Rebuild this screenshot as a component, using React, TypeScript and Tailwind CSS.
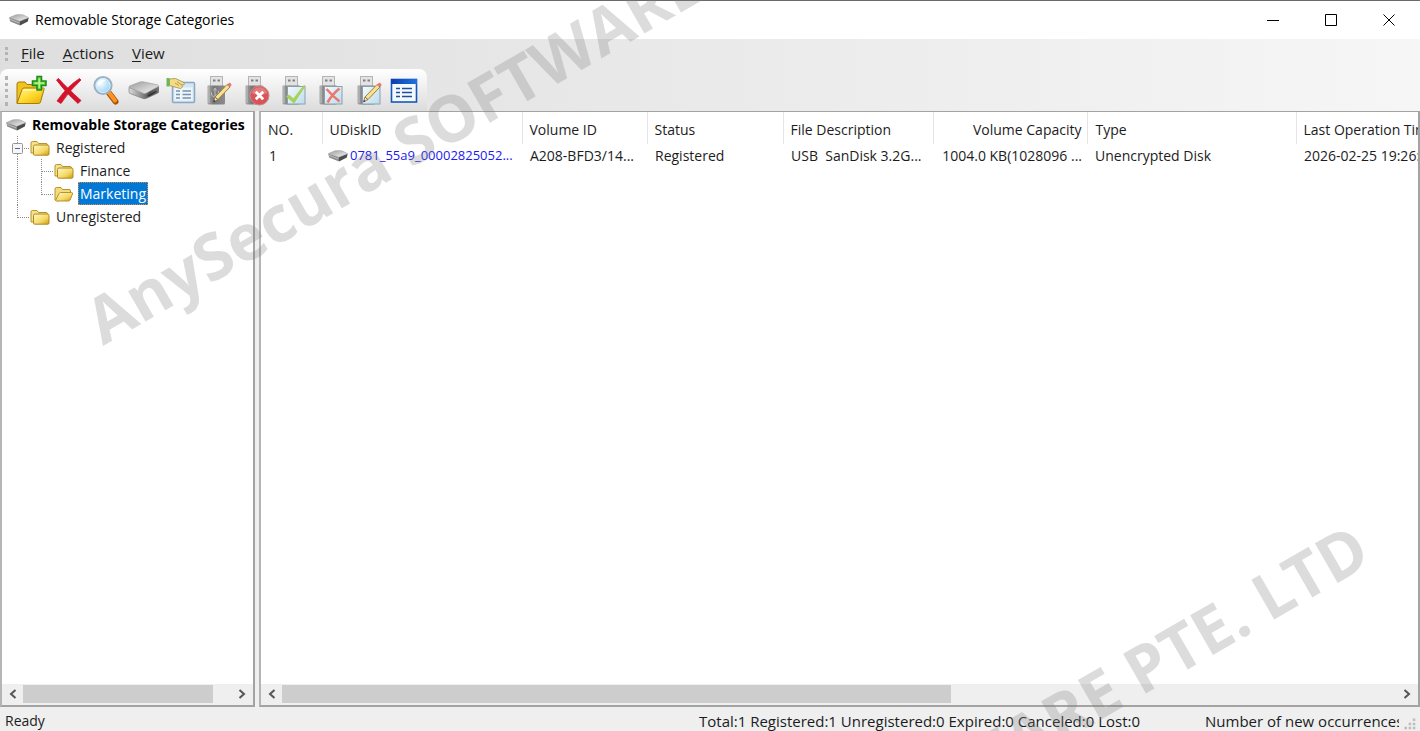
import React from "react";

type Kids = { children: React.ReactNode };

function Defs() {
  return (
    <svg width="0" height="0" className="absolute" aria-hidden="true">
      <defs>
        <linearGradient id="folder" x1="0" y1="0" x2="1" y2="1">
          <stop offset="0" stopColor="#fff3a0" />
          <stop offset="0.5" stopColor="#ffdb2e" />
          <stop offset="1" stopColor="#e6a90a" />
        </linearGradient>
        <linearGradient id="smallFolder" x1="0" y1="0" x2="1" y2="1">
          <stop offset="0" stopColor="#fff8c8" />
          <stop offset="0.6" stopColor="#f5d964" />
          <stop offset="1" stopColor="#c69a1c" />
        </linearGradient>
        <linearGradient id="driveTop" x1="0" y1="0" x2="1" y2="1">
          <stop offset="0" stopColor="#9a9a9a" />
          <stop offset="1" stopColor="#f8f8f8" />
        </linearGradient>
        <linearGradient id="driveSide" x1="0" y1="0" x2="1" y2="0">
          <stop offset="0" stopColor="#dcdcdc" />
          <stop offset="0.5" stopColor="#7c7c7c" />
          <stop offset="0.7" stopColor="#4a4a4a" />
          <stop offset="1" stopColor="#7a7a7a" />
        </linearGradient>
        <linearGradient id="stick" x1="0" y1="0" x2="1" y2="0">
          <stop offset="0" stopColor="#a8a8a8" />
          <stop offset="0.35" stopColor="#787878" />
          <stop offset="1" stopColor="#8c8c8c" />
        </linearGradient>
        <linearGradient id="sheet" x1="0" y1="0" x2="1" y2="1">
          <stop offset="0" stopColor="#f4fafd" />
          <stop offset="1" stopColor="#bcdcee" />
        </linearGradient>
        <radialGradient id="lens" cx="0.35" cy="0.35" r="0.7">
          <stop offset="0" stopColor="#ffffff" />
          <stop offset="1" stopColor="#8fd0f5" />
        </radialGradient>
        <linearGradient id="win" x1="0" y1="0" x2="1" y2="0">
          <stop offset="0" stopColor="#0a3fae" />
          <stop offset="1" stopColor="#1f72e0" />
        </linearGradient>
      </defs>
    </svg>
  );
}

function Icon({ children }: Kids) {
  return (
    <svg viewBox="0 0 32 32" className="size-8" aria-hidden="true">
      {children}
    </svg>
  );
}

function FolderAddIcon() {
  return (
    <Icon>
      <path d="M2 28V9q0-2 2-2h6l2 2.500h10v5H8z" fill="#f2c21d" stroke="#a87a08" />
      <path d="M2 28.500L7 14.500q.4-1.500 2-1.500h19.500q1 0 .6 1.200L25.500 27q-.5 1.500-2 1.500z" fill="url(#folder)" stroke="#a87a08" />
      <path d="M8.500 15h18" stroke="#fff8bd" strokeWidth="1.200" />
      <path d="M22 1.500h4.500v4.500H31v4.500h-4.500V15H22v-4.500h-4.500V6H22z" fill="#6fd43a" stroke="#188a1e" strokeWidth="1.500" />
      <path d="M24.200 3.500v9.500M19.500 8.200H29" stroke="#c7f5a0" strokeWidth="1.200" />
    </Icon>
  );
}

function DeleteIcon() {
  return (
    <Icon>
      <g fill="#d3132b" stroke="#d3132b" strokeWidth=".8" strokeLinejoin="round">
        <path d="M6.500 3.500Q15 13 29 25.500l-3 3Q13 17 4.500 5z" />
        <path d="M27.500 3.500l1.500 1.500Q17 16 9 28.500L5 26Q14.500 12 27.500 3.500z" />
      </g>
    </Icon>
  );
}

function SearchIcon() {
  return (
    <Icon>
      <path d="M19 18l6.500 8.500" stroke="#a8510a" strokeWidth="6" strokeLinecap="round" />
      <path d="M19 17.500l6 8" stroke="#ff9322" strokeWidth="4" strokeLinecap="round" />
      <circle cx="13" cy="10.500" r="8.500" fill="url(#lens)" stroke="#9db2c6" strokeWidth="2.200" />
      <circle cx="13" cy="10.500" r="7" fill="none" stroke="#d9effb" />
      <path d="M8.500 9.500q1.500-4 5.500-4" fill="none" stroke="#fff" strokeWidth="2" strokeLinecap="round" />
    </Icon>
  );
}

function DriveIcon() {
  return (
    <Icon>
      <path d="M2 12.500v4.500q0 1 1 1.500l13 5q2 .6 3.500-.2L31 18q1-.6 1-1.800V11.500L19 18z" fill="url(#driveSide)" stroke="#6e6e6e" strokeWidth=".6" />
      <path d="M2.200 12.500q-.6-1 .8-1.700L13 7q1.500-.5 3-.2l14.500 3q1.800.7.500 1.700L19 18.200q-1.200.6-2.700.1z" fill="url(#driveTop)" stroke="#a2a2a2" strokeWidth=".7" />
      <path d="M21 20.800l8.500-4.300" stroke="#2f2f2f" strokeWidth="1.400" />
    </Icon>
  );
}

function SmallDrive() {
  return (
    <svg viewBox="0 0 20 12" className="h-3 w-5 shrink-0" aria-hidden="true">
      <path d="M.3 3.800L1.200 7.500l9.800 4V6.500z" fill="#8b8b8b" />
      <path d="M11 6.500v5l7.800-4 .9-3.700z" fill="#4d4d4d" />
      <path d="M.3 3.600L7 .8q3-.6 7 0l5.700 2.800L11.500 7q-.7.300-1.500 0z" fill="url(#driveTop)" stroke="#a0a0a0" strokeWidth=".5" />
      <path d="M.8 5.300l9.200 3.500" stroke="#c9c9c9" strokeWidth=".8" />
    </svg>
  );
}

function CardIcon() {
  return (
    <Icon>
      <rect x="8.500" y="7.500" width="22" height="20" rx="1" fill="#d5e6f3" stroke="#88a9c4" strokeWidth="1.500" />
      <rect x="10.500" y="12.500" width="18" height="13" fill="#eef6fb" />
      <path d="M12 16h4M12 19.500h4M12 23h4M18.500 16H27M18.500 19.500H27M18.500 23H27" stroke="#7593ae" strokeWidth="1.400" />
      <path d="M2.500 3h3v8.500h-3z" fill="#5fbf57" />
      <path d="M5.500 4l6-.5 8.500 4q1 1.500-.5 2.500l-2-.5 1 2.500-2 1.500-4-1-3.500-1-3.500-1z" fill="#f4dc86" stroke="#a38e4d" strokeWidth=".8" />
      <path d="M11 8l4 2.500M13 6.500l4 3" stroke="#a38e4d" strokeWidth=".8" />
    </Icon>
  );
}

function Stick({ children }: Kids) {
  return (
    <Icon>
      <rect x="9.500" y="1.500" width="12" height="10" fill="#e3e3e3" stroke="#b4b4b4" />
      <path d="M12 4.500h2.500v2H12zM16.500 4.500H19v2h-2.500z" fill="#808080" />
      <path d="M7 10.500h16q1 0 1 1V28q0 1.500-1.500 1.500h-14Q6.500 29.500 6.500 28V11.500q0-1 .5-1z" fill="url(#stick)" />
      <path d="M8 11v17" stroke="#bfbfbf" />
      {children}
    </Icon>
  );
}

function Pencil() {
  return (
    <g>
      <path d="M12.500 27l1.500-5 3 2.500z" fill="#f4dfb8" stroke="#5f5138" strokeWidth=".7" />
      <path d="M14 22L26 9.500l3 2.500L17 24.500z" fill="#f9e08a" stroke="#8f7440" strokeWidth=".9" />
      <path d="M26 9.500l1.500-1.300q1.300-.8 2.300.2 1.200 1.200.5 2.300L29 12z" fill="#e8777a" />
      <path d="M12.500 27l.5-2 1.400 1.200z" fill="#222" />
    </g>
  );
}

function StickEditIcon() {
  return (
    <Stick>
      <path d="M14 26V14M14 23l-3.500-3v-2.500M14 21l3.500-2.500V16M12.500 15.500L14 13l1.500 2.500" fill="none" stroke="#c0c0c0" />
      <Pencil />
    </Stick>
  );
}

function StickStopIcon() {
  return (
    <Stick>
      <circle cx="20.500" cy="20.500" r="9.500" fill="#d8545a" stroke="#c58a8c" />
      <path d="M12.500 18a8.500 8.500 0 0 1 16 0q-8 4-16 0z" fill="#e88a8d" opacity=".7" />
      <path d="M16.800 16.800l7.400 7.400M24.200 16.800l-7.400 7.400" stroke="#fff" strokeWidth="2.800" />
    </Stick>
  );
}

function Sheet() {
  return <rect x="11.500" y="11.500" width="17.500" height="17.500" fill="url(#sheet)" stroke="#8ba0ae" />;
}

function StickApproveIcon() {
  return (
    <Stick>
      <Sheet />
      <path d="M10.500 21.500l2.500-1.500 4.500 4L28 10.500l1 .5L18 28z" fill="#a6d355" stroke="#a6d355" />
    </Stick>
  );
}

function StickRejectIcon() {
  return (
    <Stick>
      <Sheet />
      <path d="M13.500 14q6 7 13 12.500M26.500 13.500q-7 5.500-12 14" stroke="#ea7a70" strokeWidth="2.600" fill="none" />
    </Stick>
  );
}

function StickNoteIcon() {
  return (
    <Stick>
      <Sheet />
      <Pencil />
    </Stick>
  );
}

function ListIcon() {
  return (
    <Icon>
      <rect x="3.500" y="4.500" width="25" height="22.500" fill="#f3f9fe" stroke="#1558bd" strokeWidth="1.600" />
      <rect x="3" y="4" width="26" height="5" fill="url(#win)" />
      <path d="M8 13.500h4M8 17.500h4M8 21.500h4M14 13.500h10M14 17.500h10M14 21.500h10" stroke="#1d4f9f" strokeWidth="1.700" />
    </Icon>
  );
}

function TreeFolder({ open }: { open?: boolean }) {
  return (
    <svg viewBox="0 0 20 16" className="h-4 w-5 shrink-0" aria-hidden="true">
      {open ? (
        <>
          <path d="M1 14V3q0-1.500 1.500-1.500H7L8.500 3.500H15Q16.500 3.500 16.500 5v3L4 15z" fill="#f3dc7d" stroke="#b8922a" />
          <path d="M1.500 14.500L5 7.500q.5-1 1.500-1h11q1.500 0 1 1.500L16 14q-.5 1-1.500 1H2.500z" fill="url(#smallFolder)" stroke="#b8922a" />
        </>
      ) : (
        <>
          <path d="M1 13V3Q1 1.500 2.500 1.500H7L8.500 3.500H16q1.500 0 1.500 1.500v8z" fill="#f6e28a" stroke="#b8922a" />
          <path d="M3.500 6.500Q3.500 5 5 5h12.500Q19 5 19 6.500V14q0 1.200-1.200 1.200H4.700Q3.500 15.200 3.500 14z" fill="url(#smallFolder)" stroke="#b08a20" />
        </>
      )}
    </svg>
  );
}

type Link = "bar" | "tee" | "elbow" | "box";

function Connector({ kind }: { kind: Link }) {
  return (
    <svg viewBox="0 0 24 23" className="h-[23px] w-6 shrink-0" aria-hidden="true">
      <g stroke="#8c8c8c" strokeDasharray="1 1" fill="none">
        <path d={kind === "elbow" ? "M11.500 0V13" : "M11.500 0V23"} />
        {kind !== "bar" && <path d="M12 12.500H24" />}
      </g>
      {kind === "box" && (
        <>
          <rect x="6.500" y="7.500" width="10" height="10" rx="1" fill="#f7f7f7" stroke="#959595" />
          <path d="M9 12.500h5" stroke="#3f63b5" />
        </>
      )}
    </svg>
  );
}

const tree: { label: string; links: Link[]; open?: boolean }[] = [
  { label: "Registered", links: ["box"] },
  { label: "Finance", links: ["bar", "tee"] },
  { label: "Marketing", links: ["bar", "elbow"], open: true },
  { label: "Unregistered", links: ["elbow"] },
];

const tools: { label: string; icon: React.ReactNode }[] = [
  { label: "New category", icon: <FolderAddIcon /> },
  { label: "Delete", icon: <DeleteIcon /> },
  { label: "Find", icon: <SearchIcon /> },
  { label: "Disk", icon: <DriveIcon /> },
  { label: "Register", icon: <CardIcon /> },
  { label: "Edit disk", icon: <StickEditIcon /> },
  { label: "Cancel disk", icon: <StickStopIcon /> },
  { label: "Approve disk", icon: <StickApproveIcon /> },
  { label: "Reject disk", icon: <StickRejectIcon /> },
  { label: "Disk notes", icon: <StickNoteIcon /> },
  { label: "List", icon: <ListIcon /> },
];

function Grip({ className }: { className: string }) {
  return <span className={"w-0 border-l-3 border-dotted border-[#b4b4b4] " + className} />;
}

function ScrollArrow({ dir, label }: { dir: "left" | "right"; label: string }) {
  return (
    <button type="button" aria-label={label} className="flex h-5 w-5 shrink-0 items-center justify-center">
      <svg viewBox="0 0 10 10" className="size-[10px]" aria-hidden="true">
        <path d={dir === "left" ? "M7.500 1L3 5l4.500 4" : "M2.500 1L7 5 2.500 9"} fill="none" stroke="#555" strokeWidth="2" />
      </svg>
    </button>
  );
}

function ScrollBar({ thumb }: { thumb: string }) {
  return (
    <div className="flex h-[21px] shrink-0 items-start bg-[#efefef] px-px">
      <ScrollArrow dir="left" label="Scroll left" />
      <div className="flex min-w-0 flex-1 pt-px">
        <div className={"h-[18px] bg-[#cdcdcd] " + thumb} />
      </div>
      <ScrollArrow dir="right" label="Scroll right" />
    </div>
  );
}

const headers = [
  { text: "NO.", cls: "pl-[7px] text-left" },
  { text: "UDiskID", cls: "pl-[7px] text-left" },
  { text: "Volume ID", cls: "pl-[7px] text-left" },
  { text: "Status", cls: "pl-[7px] text-left" },
  { text: "File Description", cls: "pl-[7px] text-left" },
  { text: "Volume Capacity", cls: "pr-[5px] text-right" },
  { text: "Type", cls: "pl-2 text-left" },
  { text: "Last Operation Time", cls: "pl-[7px] text-left" },
];

const watermark = "AnySecura SOFTWARE PTE. LTD";

export default function App() {
  return (
    <div className="relative flex h-screen flex-col overflow-hidden bg-[#efefef] font-['Open_Sans',sans-serif] text-sm text-[#1c1c1c]">
      <Defs />

      <header className="flex h-[39px] shrink-0 items-center border-t border-[#6b696b] bg-white pr-0.5 pl-[9px]">
        <SmallDrive />
        <h1 className="ml-1.5 flex-1 text-sm text-black">Removable Storage Categories</h1>
        {[
          { label: "Minimize", d: "M0 6.500h12" },
          { label: "Maximize", d: "M.5.5h11v11H.5z" },
          { label: "Close", d: "M.5.5l11 11M11.500.5l-11 11" },
        ].map((b) => (
          <button key={b.label} type="button" aria-label={b.label} className="flex h-full w-[58px] items-center justify-center">
            <svg viewBox="0 0 12 12" className="size-3" aria-hidden="true">
              <path d={b.d} fill="none" stroke="#000" />
            </svg>
          </button>
        ))}
      </header>

      <div className="shrink-0 bg-linear-to-r from-[#dedede] to-[#f6f6f6]">
        <nav className="flex h-[30px] items-center pl-[5px]">
          <Grip className="h-[14px]" />
          <div className="flex gap-[18px] pl-[13px] text-[15px]">
            {["File", "Actions", "View"].map((m) => (
              <button key={m} type="button">
                <span className="underline underline-offset-2">{m[0]}</span>
                {m.slice(1)}
              </button>
            ))}
          </div>
        </nav>
        <div className="flex h-[42px] w-[427px] items-center rounded-tr-lg rounded-l-lg bg-linear-to-b from-white to-[#dcdcdc] pt-0.5 pr-[7px] pl-[5px]">
          <Grip className="h-[30px]" />
          <div className="flex flex-1 justify-between pl-[7px]">
            {tools.map((t) => (
              <button key={t.label} type="button" aria-label={t.label} className="size-8">
                {t.icon}
              </button>
            ))}
          </div>
        </div>
      </div>

      <main className="flex min-h-0 flex-1 gap-1">
        <aside className="flex w-[255px] shrink-0 flex-col border-2 border-t border-[#a3a3a3] border-l-[#b5b5b5] bg-white">
          <div className="flex-1 pt-px pl-1">
            <button type="button" className="flex h-[23px] items-center gap-1.5 font-bold whitespace-nowrap text-black">
              <SmallDrive />
              Removable Storage Categories
            </button>
            <ul>
              {tree.map((n) => (
                <li key={n.label} className="flex h-[23px] items-center">
                  {n.links.map((k, i) => (
                    <Connector key={i} kind={k} />
                  ))}
                  <button type="button" className="flex items-center gap-1">
                    <TreeFolder open={n.open} />
                    <span
                      className={
                        n.open
                          ? "border border-dotted border-[#e08a3a] bg-[#0078d7] px-px leading-[21px] text-white"
                          : "px-0.5 leading-[21px]"
                      }
                    >
                      {n.label}
                    </span>
                  </button>
                </li>
              ))}
            </ul>
          </div>
          <ScrollBar thumb="w-[91%]" />
        </aside>

        <section className="flex min-w-0 flex-1 flex-col border-2 border-t border-[#a3a3a3] border-l-[#b5b5b5] bg-white">
          <div className="min-h-0 flex-1 overflow-hidden">
            <table className="w-[1260px] table-fixed border-collapse whitespace-nowrap">
              <colgroup>
                <col className="w-[61px]" />
                <col className="w-[200px]" />
                <col className="w-[125px]" />
                <col className="w-[136px]" />
                <col className="w-[150px]" />
                <col className="w-[154px]" />
                <col className="w-[209px]" />
                <col />
              </colgroup>
              <thead>
                <tr className="h-8">
                  {headers.map((h) => (
                    <th key={h.text} scope="col" className={"border-r border-[#e4e4e4] pt-1 font-normal " + h.cls}>
                      {h.text}
                    </th>
                  ))}
                </tr>
              </thead>
              <tbody>
                <tr className="h-[23px]">
                  <td className="pl-2">1</td>
                  <td className="pl-1.5">
                    <span className="flex items-center gap-0.5 text-[13px] text-[#1a1af0]">
                      <SmallDrive />
                      0781_55a9_00002825052...
                    </span>
                  </td>
                  <td className="pl-2">A208-BFD3/14...</td>
                  <td className="pl-2">Registered</td>
                  <td className="pl-2">USB&nbsp; SanDisk 3.2G...</td>
                  <td className="pr-[5px] text-right">1004.0 KB(1028096 ...</td>
                  <td className="pl-2">Unencrypted Disk</td>
                  <td className="pl-2">2026-02-25 19:26:31</td>
                </tr>
              </tbody>
            </table>
          </div>
          <ScrollBar thumb="w-[60%]" />
        </section>
      </main>

      <footer className="flex h-6 shrink-0 items-center pt-1 pl-[5px] text-[15px] leading-5 whitespace-nowrap">
        <span className="flex-1 text-sm">Ready</span>
        <span className="w-[506px]">Total:1 Registered:1 Unregistered:0 Expired:0 Canceled:0 Lost:0</span>
        <span className="w-[194px] overflow-hidden">Number of new occurrences:0</span>
        <svg viewBox="0 0 22 23" className="h-[19px] w-[21px]" aria-hidden="true">
          <path d="M15 8h3v3h-3zM10 13h3v3h-3zM15 13h3v3h-3zM5 18h3v3H5zM10 18h3v3h-3zM15 18h3v3h-3z" fill="#bdbdbd" />
        </svg>
      </footer>

      <div className="pointer-events-none absolute inset-0 overflow-hidden text-[64px] leading-none font-bold whitespace-nowrap text-[#808080]/28" aria-hidden="true">
        <div className="absolute top-[289px] left-[107px] origin-bottom-left -rotate-30">{watermark}</div>
        <div className="absolute right-[42px] bottom-[162px] origin-bottom-right -rotate-30">{watermark}</div>
      </div>
    </div>
  );
}
